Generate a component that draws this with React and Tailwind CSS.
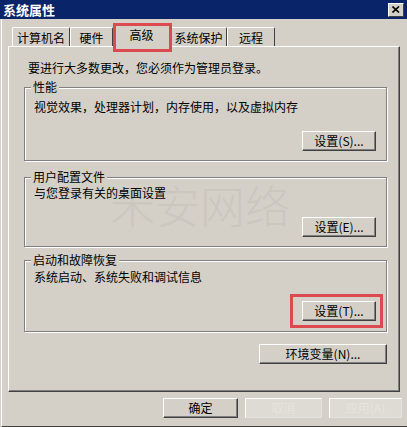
import React from 'react';

const font = { fontFamily: '"Noto Sans CJK SC", "Liberation Sans", sans-serif' };

function Btn({ label, w = 74, faded = false }) {
  return (
    <div
      className={`h-[20px] flex items-center justify-center text-[12px] leading-none border border-t-white border-l-white ${
        faded
          ? 'border-r-[#e4e2dc] border-b-[#e4e2dc] text-[#e6e4de] bg-[#dedbd4]'
          : 'border-r-[#404040] border-b-[#404040] text-black shadow-[inset_-1px_-1px_0_#808080] bg-[#d4d0c8]'
      }`}
      style={{ width: w }}
    >
      {label}
    </div>
  );
}

function Group({ title, desc, button, h, pt, mt }) {
  return (
    <div
      className="relative ml-[15px] w-[363px] border border-[#808080] shadow-[inset_1px_1px_0_#fff,1px_1px_0_#fff] flex flex-col pl-[9px] pr-[10px]"
      style={{ height: h, paddingTop: pt, marginTop: mt }}
    >
      <span className="absolute -top-[9px] left-[6px] px-[2px] bg-[#d4d0c8] text-[12px] leading-[16px]">
        {title}
      </span>
      <div className="relative z-10 text-[12px] leading-[16px]">{desc}</div>
      <div className="flex justify-end mt-[16px]">
        <Btn label={button} />
      </div>
    </div>
  );
}

const tabs = [
  { name: '计算机名', w: 58 },
  { name: '硬件', w: 43 },
  { name: '高级', w: 57, active: true },
  { name: '系统保护', w: 57 },
  { name: '远程', w: 48 },
];

export default function App() {
  return (
    <div className="relative w-[407px] h-[427px] bg-[#d4d0c8] overflow-hidden flex flex-col text-black" style={font}>
      {/* title bar */}
      <div className="h-[19px] bg-[#0a246a] flex items-center justify-between pl-[3px] pr-[3px]">
        <span className="text-white font-bold text-[13px] leading-none">系统属性</span>
        <div className="w-[16px] h-[14px] bg-[#d4d0c8] border border-t-white border-l-white border-r-[#404040] border-b-[#404040] flex items-center justify-center">
          <svg width="8" height="7" viewBox="0 0 8 7">
            <path d="M0.5 0.5 L7 6.5 M7 0.5 L0.5 6.5" stroke="#000" strokeWidth="1.6" />
          </svg>
        </div>
      </div>

      <div className="flex-1 flex flex-col border-l border-l-white ml-[1px] border-b border-b-[#404040] pl-[6px]">
        {/* tabs */}
        <div className="flex items-end h-[27px] pl-[4px] relative z-10">
          {tabs.map((t) => (
            <div
              key={t.name}
              className={`flex items-center justify-center text-[12px] leading-none border-t border-l border-r border-t-white border-l-white border-r-[#404040] rounded-t-[2px] bg-[#d4d0c8] ${
                t.active ? 'h-[23px] -mb-[1px] pb-[3px]' : 'h-[19px] pt-[1px]'
              }`}
              style={{ width: t.w }}
            >
              {t.name}
            </div>
          ))}
        </div>

        {/* panel */}
        <div className="w-[392px] h-[346px] border border-t-white border-l-white border-r-[#404040] border-b-[#404040] shadow-[inset_-1px_-1px_0_#808080] flex flex-col">
          <div className="mt-[13px] pl-[19px] text-[12px] leading-[16px]">要进行大多数更改，您必须作为管理员登录。</div>
          <Group title="性能" desc="视觉效果，处理器计划，内存使用，以及虚拟内存" button="设置(S)..." h={74} pt={11} mt={11} />
          <Group title="用户配置文件" desc="与您登录有关的桌面设置" button="设置(E)..." h={70} pt={7} mt={16} />
          <Group title="启动和故障恢复" desc="系统启动、系统失败和调试信息" button="设置(T)..." h={72} pt={8} mt={13} />
          <div className="flex justify-end w-[378px] mt-[12px]">
            <Btn label="环境变量(N)..." w={128} />
          </div>
        </div>

        {/* bottom buttons */}
        <div className="flex gap-[7px] pl-[155px] mt-[6px]">
          <Btn label="确定" w={75} />
          <Btn label="取消" w={77} faded />
          <Btn label="应用(A)" w={73} faded />
        </div>
      </div>

      {/* watermark */}
      <div className="pointer-events-none absolute left-[110px] top-[182px] text-[45px] leading-none text-[#cbc7bf] font-light">
        禾安网络
      </div>

      {/* red highlights */}
      <div className="pointer-events-none absolute left-[113px] top-[23px] w-[59px] h-[29px] border-[3px] border-[#dc4a50] z-20" />
      <div className="pointer-events-none absolute left-[290px] top-[294px] w-[93px] h-[34px] border-[3px] border-[#dc4a50] z-20" />
    </div>
  );
}
